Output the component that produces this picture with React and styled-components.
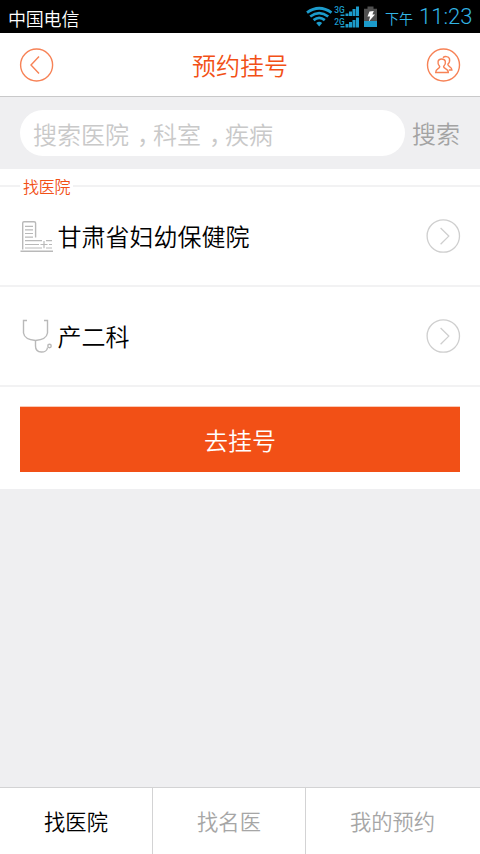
import React from 'react';
import styled, { createGlobalStyle } from 'styled-components';

const Global = createGlobalStyle`
  * { box-sizing: border-box; }
  body { margin: 0; background: #efeff1; }
  button, input { font: inherit; border: 0; padding: 0; background: none; }
`;

const Screen = styled.div`
  width: 480px;
  height: 854px;
  display: flex;
  flex-direction: column;
  overflow: hidden;
  background: #efeff1;
  color: #000;
  font-family: "Noto Sans CJK SC", sans-serif;
  font-weight: 350;
  font-size: 24px;
`;

const StatusBar = styled.header`
  height: 33px;
  flex: none;
  display: flex;
  align-items: center;
  padding: 0 7px 0 8px;
  background: #000;
  color: #33b5e5;
`;

const Carrier = styled.span`
  flex: 1;
  color: #fff;
  font-size: 18px;
  line-height: 28px;
  padding-top: 2px;
  letter-spacing: -0.2px;
`;

const StatusIcons = styled.svg`
  display: block;
  width: 74px;
  height: 33px;
  margin-right: 5px;
`;

const Meridiem = styled.span`
  font-size: 14px;
  line-height: 20px;
  padding-top: 3px;
  margin-right: 6px;
`;

const Clock = styled.span`
  font-family: Roboto, sans-serif;
  font-weight: 300;
  font-size: 22px;
  line-height: 33px;
  width: 54px;
  white-space: nowrap;
`;

const TitleBar = styled.div`
  height: 64px;
  flex: none;
  display: flex;
  align-items: center;
  justify-content: space-between;
  padding: 1px 19px 0;
  background: #fff;
  border-bottom: 1px solid #c9c9ca;
`;

const Title = styled.h1`
  margin: 0;
  font-size: 24px;
  font-weight: 350;
  line-height: 36px;
  color: #f25016;
`;

const RoundIcon = styled.svg`
  display: block;
  flex: none;
  width: 35px;
  height: 35px;
  fill: none;
  stroke: ${(p) => p.$color};
  stroke-width: ${(p) => p.$weight || 1.4};
`;

const SearchBar = styled.div`
  height: 72px;
  flex: none;
  display: flex;
  align-items: center;
  justify-content: space-between;
  padding: 0 20px;
`;

const SearchField = styled.div`
  width: 385px;
  height: 46px;
  border-radius: 23px;
  padding-left: 13px;
  background: #fff;
  color: #c9c9c9;
  line-height: 48px;
`;

const Comma = styled.span`
  display: inline-block;
  width: 24px;
  padding-left: 8px;
  font-feature-settings: "halt";
`;

const SearchButton = styled.button`
  color: #a3a3a3;
  line-height: 48px;
`;

const Panel = styled.section`
  height: 320px;
  flex: none;
  background: #fff;
  padding-top: 6px;
`;

const Legend = styled.div`
  height: 22px;
  display: flex;
  align-items: center;
  font-size: 16px;
  color: #f25016;
  &::before, &::after {
    content: "";
    height: 2px;
    background: #f2f2f3;
  }
  &::before { width: 20px; margin-right: 3px; }
  &::after { flex: 1; margin-left: 3px; }
`;

const LegendText = styled.span`
  line-height: 20px;
  padding-bottom: 1px;
  letter-spacing: -0.2px;
`;

const Row = styled.div`
  height: ${(p) => p.$height}px;
  display: flex;
  align-items: center;
  padding: 0 19px 0 20px;
  padding-bottom: ${(p) => p.$lift || 0}px;
  border-bottom: 2px solid #f2f2f3;
`;

const RowIcon = styled.svg`
  display: block;
  width: 37.5px;
  height: 36px;
  fill: none;
  stroke: #b9b9b9;
  stroke-width: 1.4;
`;

const RowText = styled.span`
  flex: 1;
  line-height: 36px;
  padding-bottom: 1px;
`;

const PrimaryButton = styled.button`
  display: block;
  width: 440px;
  height: 66px;
  margin: 19px 20px 0;
  border-top: 1px solid #fac9b6;
  background: #f25016;
  background-clip: padding-box;
  color: #fff;
  line-height: 64px;
`;

const TabBar = styled.nav`
  height: 67px;
  flex: none;
  display: grid;
  grid-template-columns: 153px 153px 174px;
  margin-top: auto;
  background: #fff;
  border-top: 1px solid #d3d3d4;
`;

const Tab = styled.button`
  font-size: 21.3px;
  line-height: 64px;
  padding-bottom: 1px;
  color: ${(p) => (p.$active ? '#000' : '#a6a6a6')};
  border-right: 1px solid #d3d3d4;
  &:last-child { border-right: 0; padding-right: 1px; }
`;

const Forward = () => (
  <RoundIcon viewBox="0 0 35 35" $color="#cfcfcf" $weight={1.3}>
    <circle cx="17.3" cy="17" r="16.2" />
    <path d="M14.6 9 22.8 17.1 14.6 25.2" />
  </RoundIcon>
);

export default function App() {
  return (
    <>
      <Global />
      <Screen>
        <StatusBar>
          <Carrier>中国电信</Carrier>
          <StatusIcons viewBox="306 0 74 33" fill="#1c9bcb">
            <g fill="none" stroke="#1c9bcb" strokeWidth="2.8">
              <path d="M307 12.600Q319.200 4 331.500 12.600" />
              <path d="M310.200 16.500Q319.200 9.700 328.200 16.500" />
              <path d="M313.600 20.200Q319.200 15.600 324.800 20.200" />
            </g>
            <path d="M316.200 23Q319.200 20.600 322.200 23L319.200 26.600Z" />
            <g fontFamily="Roboto" fontSize="8.4" fontWeight="500">
              <text x="334.3" y="13.2">3G</text>
              <text x="334.3" y="25.2">2G</text>
            </g>
            <path d="M345.500 13.500h3V16h-3zM349 11.500h3V16h-3zM352.500 9h3v7h-3zM356 6.500h3V16h-3z" />
            <path d="M340.500 26h4v1.600h-4zM345.500 24h3v3.600h-3zM349 22h3v5.600h-3zM352.500 20h3v7.600h-3zM356 17.500h3v10.100h-3zM340.500 14.600h4V16h-4z" />
            <path d="M367.500 6.500h6v2.200h3.500V21h-13V8.700h3.500z" fill="#505050" />
            <path d="M364 21h13v6h-13z" />
            <path d="m369.500 11.500 4.300-.5-1.400 3.600h2.600l-6.200 7 1.300-5h-2.600z" fill="#fff" />
          </StatusIcons>
          <Meridiem>下午</Meridiem>
          <Clock>11:23</Clock>
        </StatusBar>

        <TitleBar>
          <RoundIcon viewBox="0 0 35 35" $color="#f78256">
            <circle cx="17.600" cy="17" r="16" />
            <path d="M20 8.600 12 17 20 25.400" />
          </RoundIcon>
          <Title>预约挂号</Title>
          <RoundIcon viewBox="0 0 35 35" $color="#f78256">
            <circle cx="17.500" cy="17" r="16" />
            <path d="M13.700 18.500C12.300 16.700 11.600 14.900 12.100 13.200C13 10.300 18.400 10.300 19.300 13.200C19.800 14.900 19.200 16.700 17.600 18.500C17.300 20.800 22.600 20.500 22.300 24.500H9.700C9.400 20.500 14 20.800 13.700 18.500Z" />
            <path d="M17 9.700C18.500 7.900 22.700 8.200 23.500 10.800C24 13 23.200 14.800 21.800 16.200C21.500 18.700 26 18.500 25.900 22H22.800" />
          </RoundIcon>
        </TitleBar>

        <SearchBar>
          <SearchField>
            搜索医院<Comma>，</Comma>科室<Comma>，</Comma>疾病
          </SearchField>
          <SearchButton>搜索</SearchButton>
        </SearchBar>

        <Panel>
          <Legend>
            <LegendText>找医院</LegendText>
          </Legend>
          <Row $height={90} $lift={10}>
            <RowIcon viewBox="20 218 37.5 36">
              <path d="M22.700 249.500V223Q22.700 221.700 24 221.700H34Q35.600 221.700 35.600 223V237.500" />
              <path d="M20.500 251.300H53" />
              <path d="M25 226.300H33M25 229.800H33M25 233.500H33M25 237.200H33M25 240.700H42M46 240.700H52M25 244.500H39M40.500 244.500H47.500M49 244.500H52M25 248H42M46 248H52M44 241V248.300" strokeWidth="1.2" />
            </RowIcon>
            <RowText>甘肃省妇幼保健院</RowText>
            <Forward />
          </Row>
          <Row $height={100}>
            <RowIcon viewBox="20 318 37.5 36">
              <path d="M27 320.500H23.500V333Q24.500 339.500 35.500 340.500Q46.500 339.500 47.500 333V320.500H44" />
              <path d="M35.500 340.500V346C35.500 354 47 353.500 47.500 347.500" />
              <circle cx="49.500" cy="346" r="1.700" />
            </RowIcon>
            <RowText>产二科</RowText>
            <Forward />
          </Row>
          <PrimaryButton>去挂号</PrimaryButton>
        </Panel>

        <TabBar>
          <Tab $active>找医院</Tab>
          <Tab>找名医</Tab>
          <Tab>我的预约</Tab>
        </TabBar>
      </Screen>
    </>
  );
}
